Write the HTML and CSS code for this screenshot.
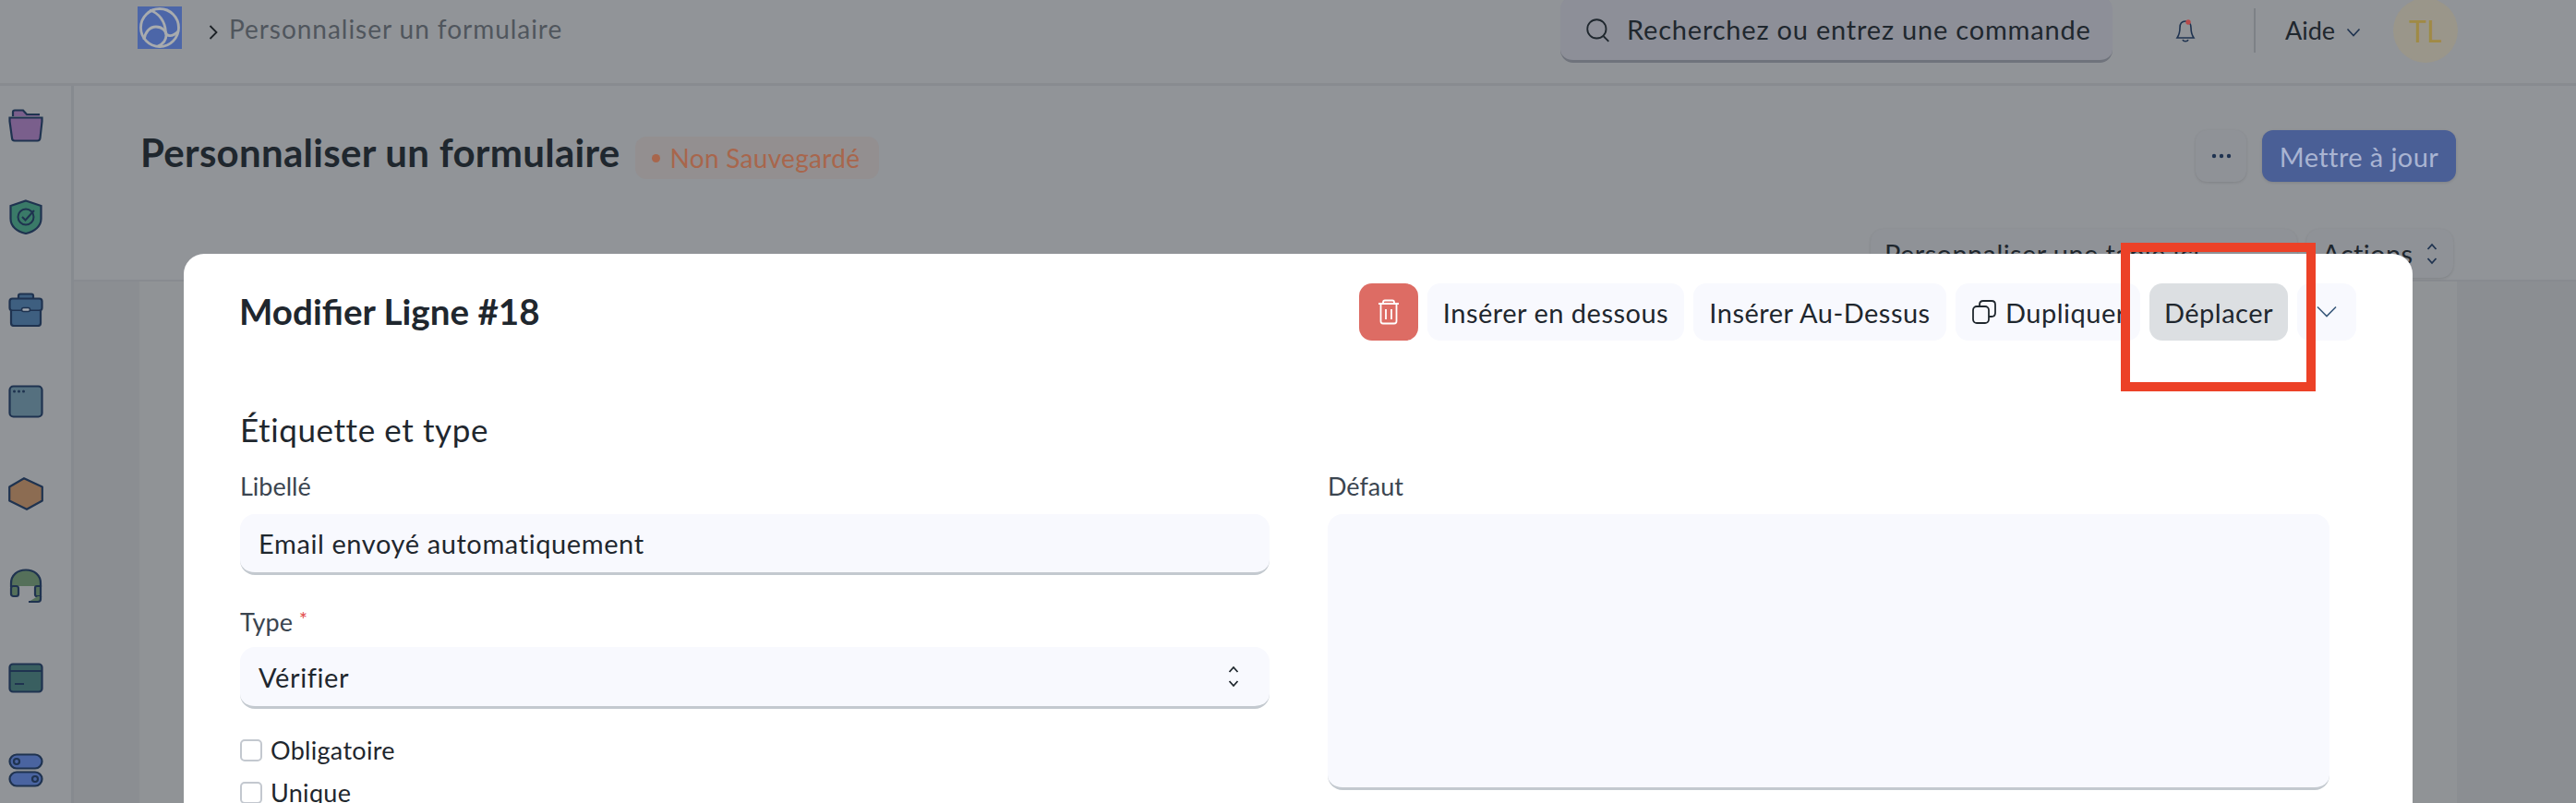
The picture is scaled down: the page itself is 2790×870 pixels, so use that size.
FILE: index.html
```html
<!DOCTYPE html>
<html lang="fr">
<head>
<meta charset="utf-8">
<title>Personnaliser un formulaire</title>
<link rel="stylesheet" href="styles.css">
</head>
<body>
<div class="page">
  <header class="navbar">
    <svg class="logo" viewBox="0 0 48 46"><rect width="48" height="46" fill="#4c66a8"/><g fill="none" stroke="#a8abae" stroke-width="2.800"><circle cx="24" cy="23" r="20.500"/><path d="M13 4C23 7 30 16 30.500 28C31 33 38 33 44 27"/><path d="M7 36C8 28 13 22 20 22C27 22 31 27 31 31C31 38 27 41 22 43"/></g></svg>
    <svg class="crumb-chev" viewBox="0 0 10 16"><path d="M1.500 1l7 7-7 7" fill="none" stroke="#1c2126" stroke-width="1.800"/></svg>
    <span class="crumb">Personnaliser un formulaire</span>
    <div class="search">
      <svg class="search-ico" viewBox="0 0 24 24"><circle cx="11" cy="11" r="9" fill="none" stroke="#1f272e" stroke-width="1.600"/><path d="M17.500 18l5 5" stroke="#1f272e" stroke-width="1.600"/></svg>
      <span class="search-text">Recherchez ou entrez une commande</span>
    </div>
    <svg class="bell" viewBox="0 0 26 26"><path d="M13 3c-4 0-6 3-6 7 0 5-1 8-3 11h18c-2-3-3-6-3-11 0-4-2-7-6-7z" fill="none" stroke="#1f3350" stroke-width="1.600"/><path d="M10 23c1 2.400 5 2.400 6 0" fill="none" stroke="#1f3350" stroke-width="1.600"/><circle cx="16" cy="4" r="2.700" fill="#b84a4a"/></svg>
    <div class="nav-div"></div>
    <span class="aide">Aide</span>
    <svg class="aide-chev" viewBox="0 0 16 10"><path d="M1.500 1.500l6.500 7 6.500-7" fill="none" stroke="#1f3350" stroke-width="1.600"/></svg>
    <div class="avatar">TL</div>
  </header>
  <div class="body-row">
    <aside class="sidebar">
      <svg class="side-ico" viewBox="0 0 38 36"><path d="M5 8V3.500Q5 1.500 7 1.500h9l4 4.500h14v2z" fill="#7a5f8c"/><path d="M5 8V3.500Q5 1.500 7 1.500h9l4 4.500h14" fill="none" stroke="#1f3350" stroke-width="2.200"/><path d="M1.500 9.500h35v4l-2 18q-.3 3-3 3H7q-3 0-3-3l-2.500-18z" fill="#7a5f8c" stroke="#1f3350" stroke-width="2.200"/></svg>
      <svg class="side-ico shield" viewBox="0 0 36 38"><path d="M18 1.500L34.500 7v14c0 8-7 14-16.500 16C8 35 1.500 29 1.500 21V7z" fill="#3a7a68" stroke="#1f3350" stroke-width="2.200"/><circle cx="18" cy="19" r="8.500" fill="none" stroke="#1f3350" stroke-width="2"/><path d="M14 19l3.500 3.500L27 12" fill="none" stroke="#1f3350" stroke-width="2"/></svg>
      <svg class="side-ico brief" viewBox="0 0 38 37"><path d="M11 7V3.500q0-2 2-2h12q2 0 2 2V7" fill="#3e5f80" stroke="#1f3350" stroke-width="2.200"/><rect x="1.500" y="6.500" width="35" height="13" rx="3" fill="#3e5f80" stroke="#1f3350" stroke-width="2.200"/><path d="M3 20v13q0 3 3 3h26q3 0 3-3V20z" fill="#3e5f80"/><path d="M3 20v13q0 3 3 3h26q3 0 3-3V20" fill="none" stroke="#1f3350" stroke-width="2.200"/><rect x="14.500" y="16.500" width="9" height="4" rx="2" fill="#a3a9b0" stroke="#1f3350" stroke-width="1.600"/></svg>
      <svg class="side-ico window" viewBox="0 0 38 36"><rect x="1.500" y="1.500" width="35" height="33" rx="4" fill="#55707f" stroke="#1f3350" stroke-width="2.200"/><circle cx="6.500" cy="7" r="1.500" fill="#1f3350"/><circle cx="11.500" cy="7" r="1.500" fill="#1f3350"/><circle cx="16.500" cy="7" r="1.500" fill="#1f3350"/></svg>
      <svg class="side-ico hex" viewBox="0 0 38 36"><path d="M17 1.200L36.800 10.500V25.500L20 34.800L1.200 25.500V10.500z" fill="#8c6c52" stroke="#1f3350" stroke-width="2.200" stroke-linejoin="round"/></svg>
      <svg class="side-ico headset" viewBox="0 0 38 38"><path d="M3 19V16C3 7 10 1.500 19 1.500S35 7 35 16v3z" fill="#55705a"/><path d="M3 20V16C3 7 10 1.500 19 1.500S35 7 35 16v4" fill="none" stroke="#1f3350" stroke-width="2.200"/><rect x="3" y="19" width="8" height="11" rx="2.500" fill="#55705a" stroke="#1f3350" stroke-width="2.200"/><path d="M35 19h-4q-2 0-2 2v7q0 2 2 2h4z" fill="#55705a" stroke="#1f3350" stroke-width="2.200"/><path d="M35 30v3q0 3-3 3h-10l10-6z" fill="#55705a"/><path d="M35 30v3q0 3-3 3h-10" fill="none" stroke="#1f3350" stroke-width="2.200"/></svg>
      <svg class="side-ico cardi" viewBox="0 0 38 33"><rect x="1.500" y="1.500" width="35" height="30" rx="3.500" fill="#395f60" stroke="#1f3350" stroke-width="2.200"/><path d="M1.500 9h35M7 23h10" stroke="#1f3350" stroke-width="2.200"/></svg>
      <svg class="side-ico toggles" viewBox="0 0 38 37"><rect x="1.500" y="1.500" width="35" height="15" rx="7.500" fill="#4a64a0" stroke="#1f3350" stroke-width="2.200"/><circle cx="9" cy="9" r="3" fill="none" stroke="#1f3350" stroke-width="2.200"/><rect x="1.500" y="20.500" width="35" height="15" rx="7.500" fill="#4a64a0" stroke="#1f3350" stroke-width="2.200"/><circle cx="29" cy="28" r="3" fill="none" stroke="#1f3350" stroke-width="2.200"/></svg>
    </aside>
    <main class="main">
      <section class="page-head">
        <div class="head-top">
          <h1 class="page-title">Personnaliser un formulaire</h1>
          <span class="badge"><span class="dot"></span>Non Sauvegardé</span>
          <button class="btn more"><svg class="dots" viewBox="0 0 22 6"><circle cx="3" cy="3" r="2.200" fill="#1f3350"/><circle cx="11" cy="3" r="2.200" fill="#1f3350"/><circle cx="19" cy="3" r="2.200" fill="#1f3350"/></svg></button>
          <button class="btn primary">Mettre à jour</button>
        </div>
        <div class="head-actions">
          <button class="btn cust">Personnaliser une table ici</button>
          <button class="btn act">Actions
            <svg class="updown" viewBox="0 0 14 26"><path d="M2.500 8L7 3l4.500 5M2.500 18L7 23l4.500-5" fill="none" stroke="#1f3350" stroke-width="1.800"/></svg>
          </button>
        </div>
      </section>
      <section class="content"><div class="content-card"></div></section>
    </main>
  </div>
</div>
<div class="modal">
  <div class="modal-head">
    <h2 class="modal-title">Modifier Ligne #18</h2>
    <div class="modal-actions">
      <button class="mbtn danger"><svg class="trash" viewBox="0 0 24 28"><path d="M1 5h22M6 5V3.500q0-2 2-2h8q2 0 2 2V5M3.500 5v19q0 2.500 2.500 2.500h12q2.500 0 2.500-2.500V5M9 11v11M15 11v11" fill="none" stroke="#fff" stroke-width="1.800"/></svg></button>
      <button class="mbtn w1">Insérer en dessous</button>
      <button class="mbtn w2">Insérer Au-Dessus</button>
      <button class="mbtn w3"><svg class="dup" viewBox="0 0 26 26"><rect x="1" y="7" width="17" height="18" rx="4" fill="none" stroke="#1f272e" stroke-width="1.800"/><path d="M8 7V5q0-4 4-4h9q4 0 4 4v9q0 4-4 4h-3" fill="none" stroke="#1f272e" stroke-width="1.800"/></svg>Dupliquer</button>
      <button class="mbtn w4 hover">Déplacer</button>
      <button class="mbtn w5"><svg class="more-chev" viewBox="0 0 22 14"><path d="M1 1.500l10 10 10-10" fill="none" stroke="#3a5a7c" stroke-width="1.600"/></svg></button>
    </div>
  </div>
  <h3 class="section-title">Étiquette et type</h3>
  <div class="form-grid">
    <div class="col">
      <label class="field-label">Libellé</label>
      <div class="input">Email envoyé automatiquement</div>
      <label class="field-label type-label">Type <span class="req">*</span></label>
      <div class="input select">Vérifier
        <svg class="updown sel" viewBox="0 0 14 26"><path d="M2.500 8L7 3l4.500 5M2.500 18L7 23l4.500-5" fill="none" stroke="#1f272e" stroke-width="1.800"/></svg>
      </div>
      <div class="check first"><span class="box"></span>Obligatoire</div>
      <div class="check"><span class="box"></span>Unique</div>
    </div>
    <div class="col">
      <label class="field-label">Défaut</label>
      <div class="input textarea"></div>
    </div>
  </div>
</div>
<div class="highlight"></div>
</body>
</html>
```
FILE: styles.css
```css
* { box-sizing: border-box; }
html, body { margin: 0; padding: 0; }
body { width: 2790px; height: 870px; overflow: hidden; position: relative; background: #919498; font-family: "Lato", "Noto Sans", sans-serif; color: #1f272e; }
button { font: inherit; color: inherit; border: 0; cursor: default; }
h1, h2, h3 { margin: 0; }

.page { width: 2790px; height: 870px; display: flex; flex-direction: column; }

.navbar { height: 93px; flex: none; display: flex; align-items: flex-start; background: #919498; border-bottom: 3px solid #888b90; padding: 0 128px 0 149px; }
.logo { width: 48px; height: 46px; margin-top: 7px; }
.crumb-chev { width: 10px; height: 16px; margin: 27px 0 0 29px; }
.crumb { font-size: 28px; color: #50565d; margin: 13px 0 0 12px; line-height: 36px; letter-spacing: .96px; }
.search { margin: -4px 0 0 auto; width: 598px; height: 72px; background: #8d8f98; border-radius: 14px; border-bottom: 3px solid #6f737c; display: flex; align-items: center; padding: 0 0 0 27px; }
.search-ico { width: 27px; height: 27px; margin-top: 4px; flex: none; }
.search-text { font-size: 29px; margin: 1px 0 0 18px; letter-spacing: .8px; white-space: nowrap; }
.bell { width: 26px; height: 26px; margin: 20px 0 0 66px; }
.nav-div { width: 2px; height: 48px; margin: 9px 0 0 61px; background: #7d8186; }
.aide { font-size: 27px; margin: 15px 0 0 32px; line-height: 36px; width: 55px; }
.aide-chev { width: 16px; height: 10px; margin: 30px 0 0 11px; }
.avatar { width: 70px; height: 70px; margin: -2px 0 0 35px; border-radius: 50%; background: #9a968a; color: #a08a45; font-size: 32px; display: flex; align-items: center; justify-content: center; }

.body-row { flex: 1; display: flex; min-height: 0; }
.sidebar { width: 80px; flex: none; border-right: 3px solid #868a8f; padding: 25px 0 0 9px; display: flex; flex-direction: column; background: #919498; }
.side-ico { width: 38px; height: 36px; flex: none; display: block; }
.shield { height: 38px; margin: 62px 0 0 1px; width: 36px; }
.brief { height: 37px; margin-top: 63px; }
.window { margin-top: 63px; }
.hex { margin-top: 64px; }
.headset { height: 38px; margin-top: 63px; }
.cardi { height: 33px; margin-top: 64px; }
.toggles { height: 37px; margin-top: 65px; }

.main { flex: 1; display: flex; flex-direction: column; min-width: 0; }
.page-head { height: 212px; flex: none; background: #919498; border-bottom: 2px solid #888b90; }
.head-top { display: flex; align-items: flex-start; padding: 0 130px 0 72px; height: 155px; }
.page-title { font-size: 42px; font-weight: 700; line-height: 50px; margin-top: 47px; letter-spacing: .28px; color: #1f272e; }
.badge { margin: 55px 0 0 16px; height: 46px; width: 264px; border-radius: 12px; background: #938f90; color: #a8664c; font-size: 28px; letter-spacing: .3px; display: flex; align-items: center; padding-left: 18px; white-space: nowrap; }
.dot { width: 9px; height: 9px; border-radius: 50%; background: #a8664c; margin-right: 11px; }
.btn { height: 56px; border-radius: 12px; background: #8f9297; font-size: 29px; box-shadow: 0 1px 3px rgba(0,0,0,.12); padding: 0; letter-spacing: .4px; }
.more { margin: 48px 0 0 auto; width: 55px; display: flex; align-items: center; justify-content: center; }
.dots { width: 22px; height: 6px; }
.primary { margin: 48px 0 0 17px; width: 210px; background: #4a5f96; color: #a9b4d2; }
.head-actions { display: flex; justify-content: flex-end; gap: 10px; padding-right: 133px; }
.cust { width: 462px; height: 53px; text-align: left; padding-left: 15px; border-radius: 14px; }
.act { width: 159px; height: 53px; border-radius: 14px; display: flex; align-items: center; padding-left: 17px; gap: 14px; }
.updown { width: 14px; height: 26px; }

.content { flex: 1; background: #8b8e92; padding: 0 129px 0 71px; }
.content-card { height: 100%; background: #909396; }

.modal { position: absolute; left: 199px; top: 275px; width: 2414px; height: 595px; overflow: hidden; background: #fff; border-radius: 22px 22px 0 0; padding: 32px 61px; }
.modal-head { display: flex; align-items: flex-start; height: 62px; }
.modal-title { font-size: 38.600px; font-weight: 700; line-height: 60px; margin-left: -1px; color: #1f272e; }
.modal-actions { margin-left: auto; display: flex; gap: 10px; }
.mbtn { height: 62px; border-radius: 14px; background: #f8f9fe; font-size: 29px; letter-spacing: .5px; padding: 0; display: flex; align-items: center; justify-content: center; white-space: nowrap; }
.danger { width: 64px; background: #dd6c64; }
.trash { width: 24px; height: 28px; }
.w1 { width: 278px; }
.w2 { width: 274px; }
.w3 { width: 200px; justify-content: flex-start; padding-left: 18px; overflow: hidden; }
.dup { width: 26px; height: 26px; margin-right: 10px; flex: none; }
.w4 { width: 150px; }
.hover { background: #dcdfe2; }
.w5 { width: 64px; }
.more-chev { width: 22px; height: 14px; }

.section-title { font-size: 35px; font-weight: 400; letter-spacing: .6px; line-height: 44px; margin-top: 74px; }
.form-grid { display: grid; grid-template-columns: 1115px 1085px; column-gap: 63px; margin-top: 22px; }
.field-label { display: block; height: 36px; font-size: 27px; line-height: 36px; color: #3b4550; }
.input { height: 66px; margin-top: 12px; background: #f8f9fe; border-radius: 16px; border-bottom: 3px solid #c3c9cf; font-size: 29px; letter-spacing: .6px; display: flex; align-items: center; padding: 0 20px; }
.type-label { margin-top: 30px; }
.req { color: #e24c4c; font-size: 22px; vertical-align: 5px; }
.select { height: 67px; justify-content: space-between; padding-right: 32px; }
.textarea { height: 299px; }
.check { display: flex; align-items: center; font-size: 27px; letter-spacing: .3px; line-height: 36px; margin-top: 10px; }
.check.first { margin-top: 27px; }
.box { width: 24px; height: 24px; border: 2px solid #c3c8cf; border-radius: 5px; margin-right: 9px; background: #fff; }

.highlight { position: absolute; left: 2297px; top: 263px; width: 211px; height: 161px; border: 10px solid #ec4127; }
```
